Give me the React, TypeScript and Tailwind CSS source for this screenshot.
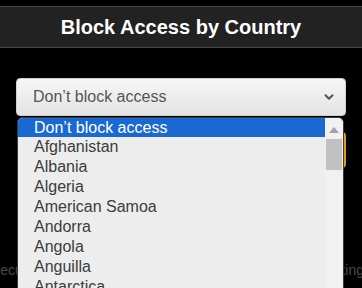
import { ChevronDown } from "lucide-react";

const countries = [
  "Afghanistan",
  "Albania",
  "Algeria",
  "American Samoa",
  "Andorra",
  "Angola",
  "Anguilla",
  "Antarctica",
  "Antigua and Barbuda",
];

export default function App() {
  return (
    <div className="relative w-[362px] h-[288px] overflow-hidden bg-black pt-[6px] font-['Liberation_Sans',Arial,sans-serif]">
      {/* Header */}
      <div className="h-[42px] border-y border-[#474747] bg-[#222222] flex items-center justify-center">
        <h1 className="text-[20px] font-bold text-white leading-none">Block Access by Country</h1>
      </div>

      {/* Select */}
      <div className="px-4 mt-[30px]">
        <div className="h-[38px] rounded-[4px] border border-[#d0d0d0] bg-gradient-to-b from-[#f7f7f7] to-[#e3e3e3] flex items-center justify-between pl-[16px] pr-[9px]">
          <span className="text-[16px] text-[#555555]">Don’t block access</span>
          <ChevronDown className="w-[14px] h-[14px] text-[#555555]" strokeWidth={3.5} />
        </div>
      </div>

      {/* Content behind the open list */}
      <div className="pl-[24px] pr-4 mt-[16px]">
        <div className="h-[36px] rounded-[4px] border-2 border-[#e39a1c] bg-white" />
      </div>
      <div className="mt-[92px] -ml-[9px] w-[373px] flex justify-between whitespace-nowrap text-[14px] text-[#4a4a4a]">
        <span>Security</span>
        <span>blocking</span>
      </div>

      {/* Open dropdown list */}
      <div className="absolute left-[17px] top-[117px] w-[327px] h-[190px] rounded-t-[6px] border border-[#3a3a3a] bg-[#ededed] overflow-hidden flex">
        <ul className="flex-1 text-[16px] leading-[20px] text-[#3c3c3c]">
          <li className="h-[19px] leading-[19px] bg-[#1a69d3] text-white pl-[16px]">Don’t block access</li>
          {countries.map((c) => (
            <li key={c} className="h-[20px] pl-[16px]">
              {c}
            </li>
          ))}
        </ul>
        <div className="w-[18px] bg-[#f1f1f1] flex flex-col items-center">
          <svg width="10" height="6" viewBox="0 0 10 6" className="mt-[9px]">
            <polygon points="5,0 10,6 0,6" fill="#a3a3a3" />
          </svg>
          <div className="mt-[6px] w-[16px] h-[31px] bg-[#c1c1c1]" />
        </div>
      </div>
    </div>
  );
}
